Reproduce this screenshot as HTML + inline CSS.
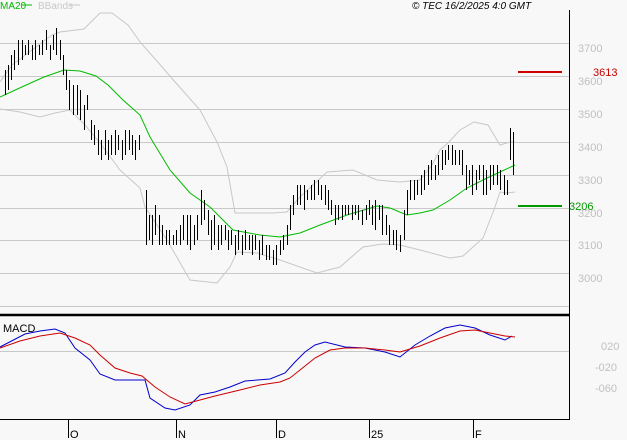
<!DOCTYPE html><html><head><style>body{margin:0;background:#f8f8f8;width:627px;height:440px;overflow:hidden;font-family:"Liberation Sans",sans-serif}</style></head><body>
<svg width="627" height="440" xmlns="http://www.w3.org/2000/svg" style="position:absolute;left:0;top:0">
<rect width="627" height="440" fill="#f8f8f8"/>
<g stroke="#c8c8c8" stroke-width="1">
<line x1="0" y1="43.5" x2="569" y2="43.5"/><line x1="0" y1="76.5" x2="569" y2="76.5"/><line x1="0" y1="109.5" x2="569" y2="109.5"/><line x1="0" y1="142.5" x2="569" y2="142.5"/><line x1="0" y1="175.5" x2="569" y2="175.5"/><line x1="0" y1="208.5" x2="569" y2="208.5"/><line x1="0" y1="240.5" x2="569" y2="240.5"/><line x1="0" y1="273.5" x2="569" y2="273.5"/><line x1="0" y1="306.5" x2="569" y2="306.5"/><line x1="0" y1="351.5" x2="569" y2="351.5"/>
</g>
<line x1="569.5" y1="10" x2="569.5" y2="420" stroke="#000"/>
<line x1="0" y1="315" x2="570" y2="315" stroke="#000" stroke-width="2.5"/>
<line x1="0" y1="419.5" x2="570" y2="419.5" stroke="#000"/>
<g fill="none" stroke-width="1">
<polyline stroke="#c8c8c8" points="0,82 12,65 32,50 52,35 60,32 84,29 100,13 112,13 128,25 140,42 156,60 176,83 200,110 217,142 227,167 235,213 273,213 287,212 300,197 327,172 353,170 377,180 400,182 420,180 432,165 440,150 448,143 460,130 474,122 488,125 500,145 510,142 515,142"/>
<polyline stroke="#c8c8c8" points="0,109 20,112 40,117 55,113 70,110 85,125 100,143 120,170 140,188 145,207 167,240 190,280 217,283 230,267 237,252 257,253 280,260 317,273 340,267 363,247 383,244 400,245 420,250 450,258 463,256 483,238 495,207 500,192 507,193 515,192"/>
<polyline stroke="#00bb00" points="0,97 24,86 44,77 64,70 80,71 96,76 108,85 123,100 140,115 150,137 170,170 190,193 210,207 233,230 260,235 280,237 300,233 320,225 347,215 377,206 390,208 407,215 420,213 433,210 450,200 467,188 487,178 500,172 515,165"/>
<polyline stroke="#0000cc" points="0,347 25,334 40,331 55,329 65,333 75,348 90,360 100,374 115,380 135,380 145,380 150,398 165,408 175,410 190,405 200,395 215,392 230,387 245,381 270,379 285,373 295,362 305,352 315,345 325,342 345,347 365,348 385,352 400,357 415,345 430,336 445,328 460,325 475,328 490,335 505,340 512,336"/>
<polyline stroke="#cc0000" points="0,348 20,341 40,336 60,333 75,338 90,345 100,355 115,368 130,373 142,376 155,387 170,397 185,404 200,400 215,396 240,390 260,385 280,382 290,378 300,370 315,358 330,350 345,348 365,348 385,350 400,352 420,346 440,338 460,331 475,330 490,333 505,336 515,337"/>
</g>
<path stroke="#000" stroke-width="1" shape-rendering="crispEdges" fill="none" d="M5.5 70V95M8.5 65V90M11.5 55V80M14.5 50V70M18.5 40V65M22.5 40V60M25.5 45V55M28.5 40V55M32.5 45V60M35.5 40V60M39.5 45V55M42.5 40V55M46.5 30V50M50.5 45V60M53.5 35V50M56.5 28V55M60.5 40V60M63.5 55V75M66.5 70V90M69.5 80V110M73.5 85V115M77.5 85V115M80.5 90V120M84.5 105V130M87.5 95V110M91.5 120V140M94.5 125V145M98.5 130V155M101.5 140V160M105.5 130V155M108.5 140V160M111.5 135V155M115.5 130V155M118.5 135V150M122.5 140V160M125.5 130V155M129.5 130V150M132.5 135V155M135.5 140V160M139.5 135V150M146.5 190V245M149.5 215V240M152.5 215V245M155.5 205V235M159.5 215V245M162.5 225V245M166.5 230V245M169.5 230V245M173.5 235V245M176.5 230V245M180.5 225V245M183.5 215V240M187.5 215V245M190.5 215V250M194.5 225V245M197.5 215V240M201.5 190V225M204.5 200V220M208.5 210V235M211.5 220V250M214.5 215V245M218.5 225V250M221.5 225V245M225.5 225V240M228.5 230V250M231.5 230V245M235.5 235V255M238.5 230V250M242.5 235V255M245.5 230V250M249.5 235V250M252.5 235V255M255.5 235V250M259.5 240V260M262.5 235V255M266.5 245V260M269.5 245V260M273.5 250V265M276.5 245V265M280.5 240V255M283.5 235V250M287.5 225V245M290.5 205V230M293.5 195V215M297.5 185V205M300.5 185V205M304.5 185V210M307.5 190V200M311.5 185V200M314.5 180V200M318.5 180V195M321.5 185V200M325.5 185V205M328.5 190V210M331.5 200V215M335.5 205V225M338.5 205V220M342.5 205V220M345.5 205V215M348.5 205V215M352.5 205V220M355.5 205V215M358.5 205V220M362.5 210V225M366.5 205V220M369.5 200V215M372.5 205V225M375.5 200V230M379.5 205V220M382.5 205V235M386.5 215V235M389.5 225V245M393.5 230V245M396.5 230V250M400.5 235V252M404.5 210V240M407.5 190V215M410.5 180V200M414.5 180V200M417.5 180V195M421.5 175V195M424.5 170V190M428.5 165V185M431.5 160V180M435.5 165V180M438.5 155V175M442.5 150V170M445.5 150V165M448.5 145V160M452.5 145V165M455.5 150V165M459.5 150V165M462.5 150V175M466.5 165V190M469.5 170V185M472.5 165V195M476.5 170V190M479.5 165V180M483.5 165V195M486.5 170V195M490.5 165V190M493.5 165V185M497.5 165V185M500.5 170V190M504.5 175V195M507.5 180V195M510.5 128V160M513.5 132V175"/>
<line x1="518" y1="72" x2="562" y2="72" stroke="#cc0000" stroke-width="2"/>
<line x1="518" y1="206" x2="562" y2="206" stroke="#009900" stroke-width="2"/>
<g stroke="#000"><line x1="68.5" y1="419" x2="68.5" y2="438"/><line x1="176.5" y1="419" x2="176.5" y2="438"/><line x1="276.5" y1="419" x2="276.5" y2="438"/><line x1="369.5" y1="419" x2="369.5" y2="438"/><line x1="473.5" y1="419" x2="473.5" y2="438"/></g>
<g font-size="11" fill="#000"><text x="70" y="438">O</text><text x="178" y="438">N</text><text x="278" y="438">D</text><text x="371" y="438">25</text><text x="475" y="438">F</text>
<text x="3" y="332">MACD</text>
<text x="412" y="9" font-style="italic" font-size="10">© TEC 16/2/2025 4:0 GMT</text></g>
<text x="0" y="9" font-size="10" fill="#00bb00">MA20</text><line x1="22" y1="5" x2="32" y2="5" stroke="#00bb00"/>
<text x="38" y="9" font-size="10" fill="#c8c8c8">BBands</text><line x1="70" y1="5" x2="80" y2="5" stroke="#c8c8c8"/>
<g font-size="11" fill="#c0c0c0"><text x="578" y="52">3700</text><text x="578" y="85">3600</text><text x="578" y="118">3500</text><text x="578" y="151">3400</text><text x="578" y="184">3300</text><text x="578" y="217">3200</text><text x="578" y="249">3100</text><text x="578" y="282">3000</text>
<text x="601" y="350">020</text><text x="595" y="371">-020</text><text x="595" y="392">-060</text></g>
<text x="593" y="76" font-size="11" fill="#cc0000">3613</text>
<text x="569" y="210" font-size="11" fill="#009900">3206</text>
</svg></body></html>
